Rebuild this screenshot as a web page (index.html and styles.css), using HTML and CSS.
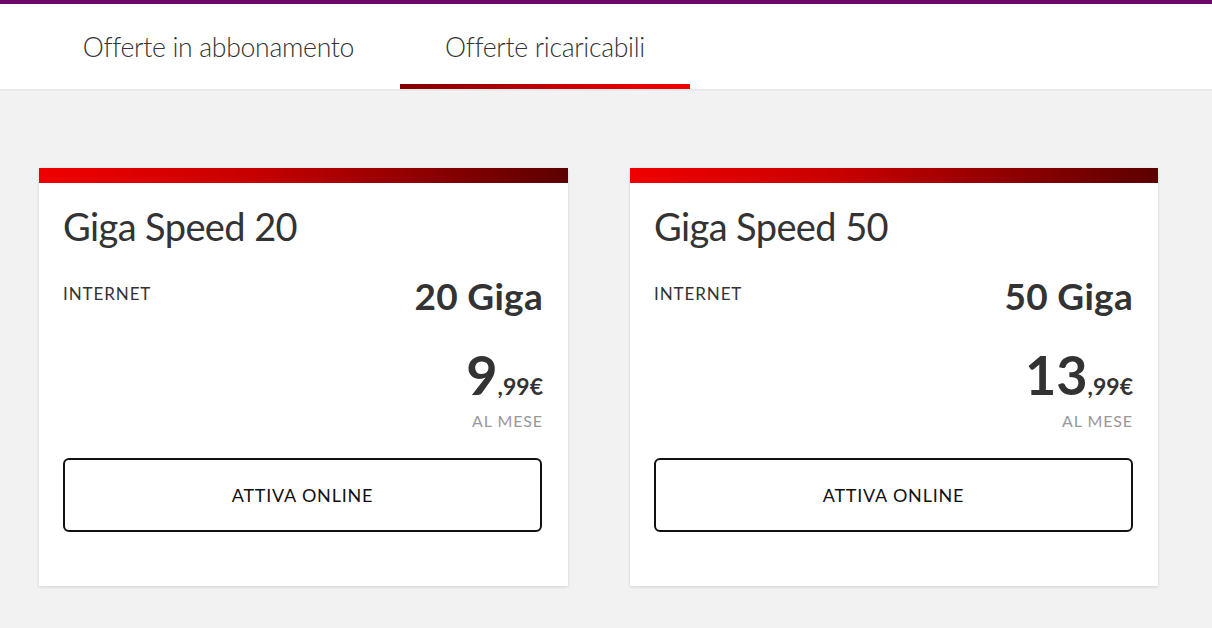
FILE: index.html
```html
<!DOCTYPE html>
<html lang="it">
<head>
<meta charset="utf-8">
<title>Offerte ricaricabili</title>
<link rel="stylesheet" href="styles.css">
</head>
<body>
<div class="topbar"></div>
<header class="tabs">
  <a class="tab">Offerte in abbonamento</a>
  <a class="tab active">Offerte ricaricabili</a>
</header>
<main class="cards">
  <section class="card">
    <div class="card-stripe"></div>
    <div class="card-body">
      <h2 class="title">Giga Speed 20</h2>
      <div class="feature">
        <span class="feature-label">INTERNET</span>
        <span class="feature-value">20 Giga</span>
      </div>
      <div class="price">
        <div class="price-amount"><span class="price-int">9</span><span class="price-dec">,99€</span></div>
        <div class="price-period">AL MESE</div>
      </div>
      <button class="cta">ATTIVA ONLINE</button>
    </div>
  </section>
  <section class="card">
    <div class="card-stripe"></div>
    <div class="card-body">
      <h2 class="title">Giga Speed 50</h2>
      <div class="feature">
        <span class="feature-label">INTERNET</span>
        <span class="feature-value">50 Giga</span>
      </div>
      <div class="price">
        <div class="price-amount"><span class="price-int">13</span><span class="price-dec">,99€</span></div>
        <div class="price-period">AL MESE</div>
      </div>
      <button class="cta">ATTIVA ONLINE</button>
    </div>
  </section>
</main>
</body>
</html>
```
FILE: styles.css
```css
* { box-sizing: border-box; }
html, body { margin: 0; padding: 0; }
body {
  background: #f2f2f2;
  font-family: Lato, "Open Sans", sans-serif;
  color: #333;
  width: 1212px;
  height: 628px;
  overflow: hidden;
}
.topbar {
  height: 4px;
  background: #6c0868;
}
.tabs {
  display: flex;
  height: 87px;
  background: #fff;
  padding-left: 37px;
  border-bottom: 2px solid #e9e9e9;
}
.tab {
  display: flex;
  align-items: flex-start;
  justify-content: center;
  padding-top: 27px;
  font-size: 26.6px;
  font-weight: 300;
  color: #333;
  letter-spacing: -0.3px;
  height: 85px;
}
.tab:first-child { width: 363px; }
.tab.active {
  width: 290px;
  position: relative;
}
.tab.active::after {
  content: "";
  position: absolute;
  left: 0; right: 0; bottom: 0;
  height: 5px;
  background: linear-gradient(to right, #820000, #e60000 80%, #f00000);
}
.cards {
  display: flex;
  gap: 62px;
  padding: 77px 0 0 39px;
}
.card {
  width: 529px;
  height: 418px;
  background: #fff;
  box-shadow: 0 1px 3px rgba(0,0,0,0.14);
}
.card + .card { width: 528px; }
.card-stripe {
  height: 15px;
  background: linear-gradient(to right, #f00000, #c80000 40%, #8a0000 75%, #5c0000);
}
.card-body {
  padding: 18px 25px 0 24px;
}
.title {
  margin: 0;
  font-size: 38px;
  font-weight: 400;
  line-height: 50px;
  letter-spacing: -0.6px;
  color: #333;
}
.feature {
  display: flex;
  justify-content: space-between;
  align-items: flex-start;
  margin-top: 30px;
}
.feature-label {
  font-size: 17px;
  letter-spacing: 0.9px;
  line-height: 22px;
  margin-top: 2px;
}
.feature-value {
  font-size: 37px;
  font-weight: 700;
  line-height: 40px;
  margin-top: -5px;
  letter-spacing: 0.3px;
}
.price {
  display: flex;
  flex-direction: column;
  align-items: flex-end;
  margin-top: 30px;
}
.price-amount {
  line-height: 58px;
  white-space: nowrap;
}
.price-int {
  font-size: 54px;
  font-weight: 700;
}
.price-dec {
  font-size: 23px;
  font-weight: 700;
}
.price-period {
  font-size: 16px;
  letter-spacing: 0.9px;
  color: #999;
  line-height: 20px;
  margin-top: -7px;
}
.cta {
  display: block;
  width: 479px;
  height: 74px;
  margin-top: 27px;
  background: #fff;
  border: 2px solid #111;
  border-radius: 6px;
  font-family: Lato, "Open Sans", sans-serif;
  font-size: 18px;
  letter-spacing: 0.8px;
  color: #111;
  padding: 0;
}
```
